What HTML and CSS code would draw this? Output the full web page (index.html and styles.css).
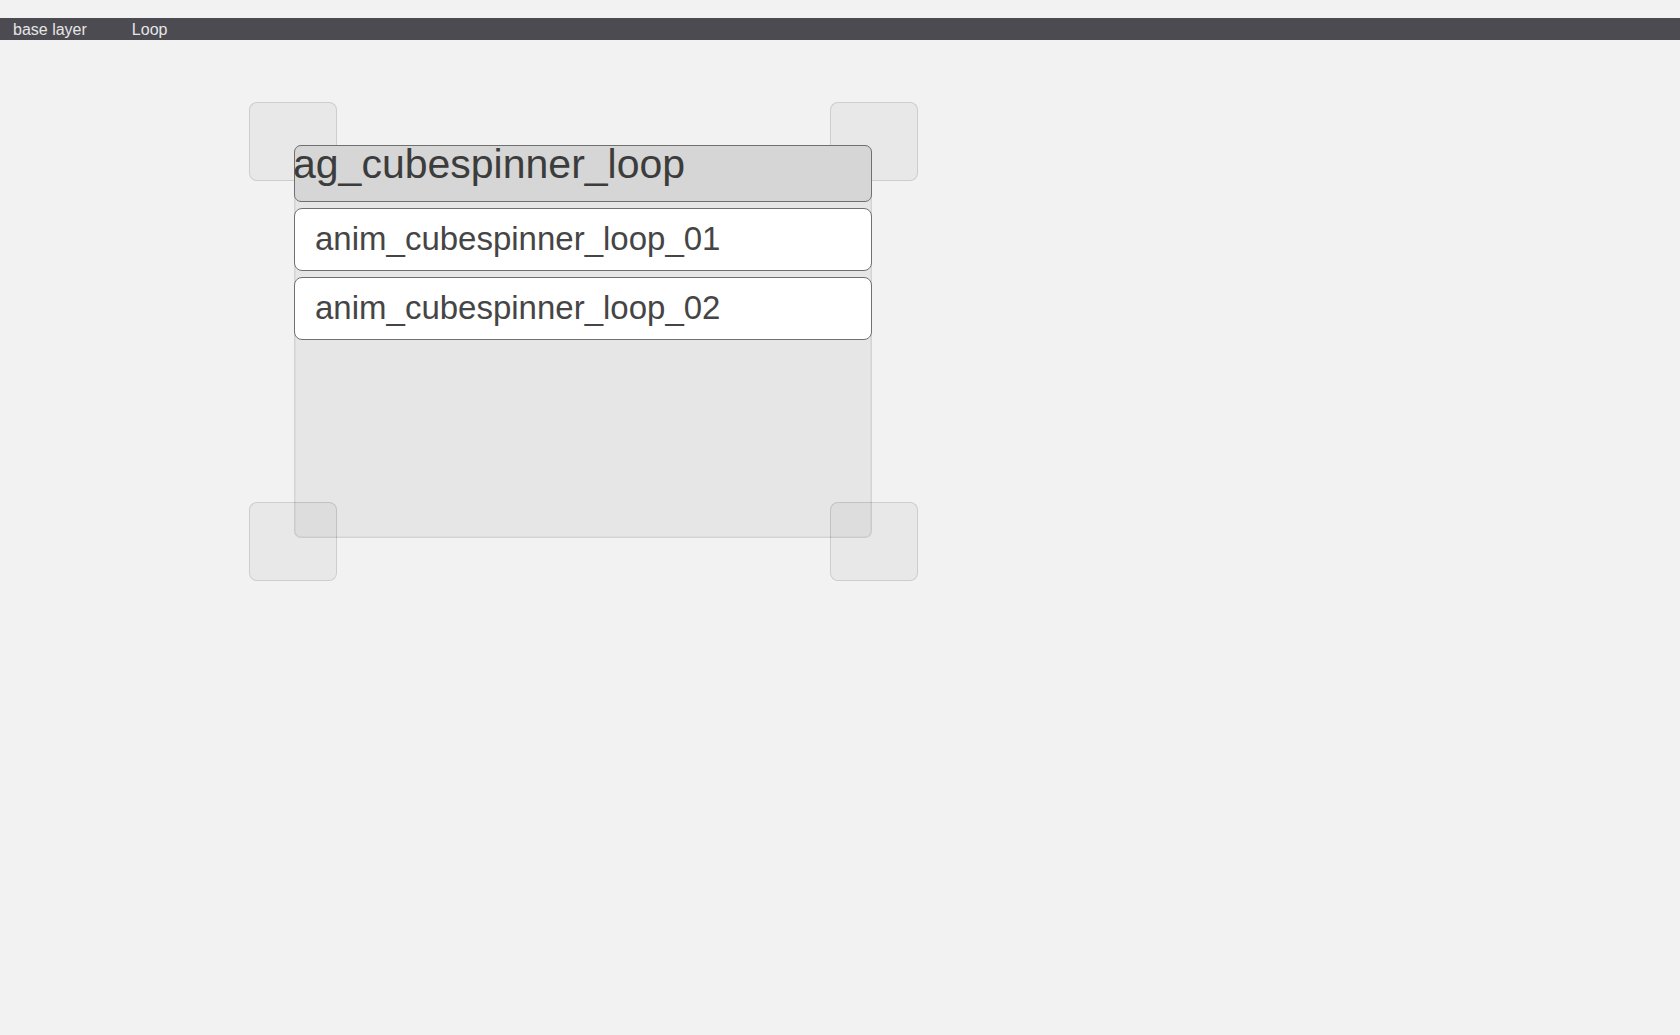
FILE: index.html
```html
<!DOCTYPE html>
<html>
<head>
<meta charset="utf-8">
<link rel="stylesheet" href="styles.css">
</head>
<body>
<div class="topbar">
  <span class="crumb crumb-first">base layer</span>
  <span class="crumb">Loop</span>
</div>
<div class="canvas">
  <div class="handle handle-tl"></div>
  <div class="handle handle-tr"></div>
  <div class="node">
    <div class="node-header">ag_cubespinner_loop</div>
    <div class="node-item">anim_cubespinner_loop_01</div>
    <div class="node-item">anim_cubespinner_loop_02</div>
  </div>
  <div class="handle handle-bl"></div>
  <div class="handle handle-br"></div>
</div>
</body>
</html>
```
FILE: styles.css
```css
html, body {
  margin: 0;
  padding: 0;
  background: #f2f2f2;
  font-family: "Liberation Sans", Arial, sans-serif;
}
body {
  width: 1680px;
  height: 1035px;
  overflow: hidden;
}
.topbar {
  margin-top: 18px;
  height: 22px;
  box-sizing: border-box;
  padding: 2px 0 0 13px;
  background: #4c4b52;
  display: flex;
  gap: 45px;
  color: #e6e6e6;
  font-size: 16px;
  line-height: 20px;
}
.canvas {
  position: relative;
  height: 995px;
}
.handle {
  position: absolute;
  width: 88px;
  height: 79px;
  box-sizing: border-box;
  border: 1.5px solid rgba(0, 0, 0, 0.12);
  border-radius: 8px;
  background: rgba(0, 0, 0, 0.04);
}
.handle-tl { left: 249px; top: 62px; }
.handle-tr { left: 830px; top: 62px; }
.handle-bl { left: 249px; top: 462px; }
.handle-br { left: 830px; top: 462px; }
.node {
  position: absolute;
  left: 294px;
  top: 105px;
  width: 578px;
  height: 393px;
  box-sizing: border-box;
  border-radius: 7px;
  background: rgba(0, 0, 0, 0.048);
  box-shadow: inset 0 0 0 1.5px rgba(0, 0, 0, 0.08);
  display: flex;
  flex-direction: column;
  gap: 6px;
}
.node-header {
  height: 57px;
  box-sizing: border-box;
  border: 1.5px solid #707070;
  border-radius: 7px;
  background: #d6d6d6;
  color: #3c3c3c;
  font-size: 41px;
  line-height: 37px;
  text-indent: -2px;
  white-space: nowrap;
}
.node-item {
  height: 63px;
  box-sizing: border-box;
  border: 1.5px solid #707070;
  border-radius: 8px;
  background: #ffffff;
  color: #454545;
  font-size: 33px;
  display: flex;
  align-items: center;
  padding: 0 0 1px 20px;
  white-space: nowrap;
}
```
